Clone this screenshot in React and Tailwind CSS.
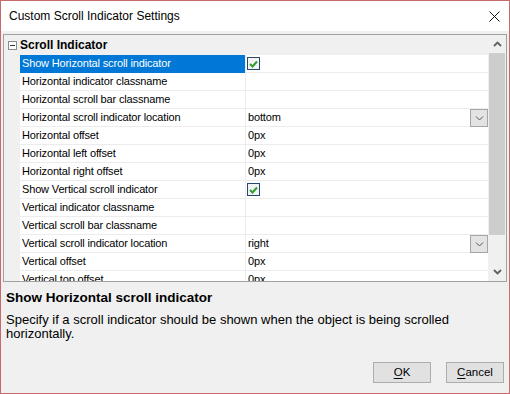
import React from "react";

const rows = [
  { name: "Show Horizontal scroll indicator", type: "check", selected: true },
  { name: "Horizontal indicator classname", value: "" },
  { name: "Horizontal scroll bar classname", value: "" },
  { name: "Horizontal scroll indicator location", value: "bottom", type: "select" },
  { name: "Horizontal offset", value: "0px" },
  { name: "Horizontal left offset", value: "0px" },
  { name: "Horizontal right offset", value: "0px" },
  { name: "Show Vertical scroll indicator", type: "check" },
  { name: "Vertical indicator classname", value: "" },
  { name: "Vertical scroll bar classname", value: "" },
  { name: "Vertical scroll indicator location", value: "right", type: "select" },
  { name: "Vertical offset", value: "0px" },
  { name: "Vertical top offset", value: "0px" },
];

function Chevron({ down, className }) {
  return (
    <svg width="9" height="6" viewBox="0 0 9 6" className={className}>
      <path
        d={down ? "M1 1 L4.5 4.5 L8 1" : "M1 5 L4.5 1.5 L8 5"}
        fill="none"
        stroke="#606060"
        strokeWidth="1.8"
      />
    </svg>
  );
}

function CheckBox() {
  return (
    <div className="w-[13px] h-[13px] border border-[#26486e] bg-[#f3f3f3] flex items-center justify-center">
      <svg width="9" height="8" viewBox="0 0 9 8">
        <path d="M1 4 L3.5 6.5 L8 1.5" fill="none" stroke="#2f9e2f" strokeWidth="2" />
      </svg>
    </div>
  );
}

function Row({ row }) {
  return (
    <div className="flex h-[18px] shrink-0">
      <div className="w-[16px] bg-[#f0f0f0]" />
      <div
        className={
          row.selected
            ? "w-[225px] pl-[2px] bg-[#0078d7] text-white border-b border-[#0078d7] flex items-center"
            : "w-[225px] pl-[2px] bg-white text-black border-b border-[#ececec] flex items-center"
        }
      >
        {row.name}
      </div>
      <div className="flex-1 bg-white border-l border-b border-[#ececec] pl-[1px] flex items-center justify-between">
        {row.type === "check" ? (
          <CheckBox />
        ) : (
          <span className="pl-[1px]">{row.value}</span>
        )}
        {row.type === "select" && (
          <div className="w-[18px] h-[18px] -mb-[1px] border border-[#a6a6a6] bg-[#e3e3e3] flex items-center justify-center">
            <svg width="9" height="5" viewBox="0 0 9 5">
              <path d="M1 0.5 L4.5 4 L8 0.5" fill="none" stroke="#555" strokeWidth="1" />
            </svg>
          </div>
        )}
      </div>
    </div>
  );
}

export default function App() {
  return (
    <div className="w-[510px] h-[394px] border border-[#c96a6a] bg-[#f0f0f0] flex flex-col font-['Liberation_Sans',Arial,sans-serif] text-black">
      {/* Title bar */}
      <div className="h-[30px] shrink-0 bg-white flex items-center justify-between pl-[8px] pr-[9px]">
        <span className="text-[12px]">Custom Scroll Indicator Settings</span>
        <svg width="11" height="11" viewBox="0 0 11 11">
          <path d="M0.5 0.5 L10.5 10.5 M10.5 0.5 L0.5 10.5" stroke="#111" strokeWidth="1" />
        </svg>
      </div>

      {/* Property grid */}
      <div className="px-[2px] pt-[3px]">
        <div className="h-[248px] border border-[#a0a0a0] flex bg-[#f0f0f0]">
          <div className="flex-1 flex flex-col overflow-hidden text-[11px] tracking-[-0.15px]">
            <div className="h-[20px] shrink-0 flex items-center bg-[#f0f0f0]">
              <div className="w-[16px] flex justify-center">
                <div className="w-[9px] h-[9px] border border-[#8c8c8c] bg-white flex items-center justify-center">
                  <div className="w-[5px] h-[1px] bg-[#333]" />
                </div>
              </div>
              <span className="font-bold text-[12px] tracking-normal">Scroll Indicator</span>
            </div>
            {rows.map((row) => (
              <Row key={row.name} row={row} />
            ))}
          </div>

          {/* Scrollbar */}
          <div className="w-[18px] flex flex-col bg-[#f0f0f0]">
            <div className="h-[18px] flex items-center justify-center">
              <Chevron />
            </div>
            <div className="h-[182px] mx-[1px] bg-[#cdcdcd]" />
            <div className="flex-1" />
            <div className="h-[19px] flex items-center justify-center">
              <Chevron down />
            </div>
          </div>
        </div>
      </div>

      {/* Description */}
      <div className="px-[5px] mt-[8px]">
        <div className="font-bold text-[13.5px] leading-[16px]">Show Horizontal scroll indicator</div>
        <p className="mt-[7px] text-[13px] leading-[14px]">
          Specify if a scroll indicator should be shown when the object is being scrolled horizontally.
        </p>
      </div>

      {/* Buttons */}
      <div className="mt-auto flex justify-end gap-[15px] pr-[5px] pb-[10px]">
        <button className="w-[58px] h-[21px] border border-[#adadad] bg-[#e1e1e1] text-[11.5px] leading-none">
          <span className="underline underline-offset-2">O</span>K
        </button>
        <button className="w-[58px] h-[21px] border border-[#adadad] bg-[#e1e1e1] text-[11.5px] leading-none">
          <span className="underline underline-offset-2">C</span>ancel
        </button>
      </div>
    </div>
  );
}
